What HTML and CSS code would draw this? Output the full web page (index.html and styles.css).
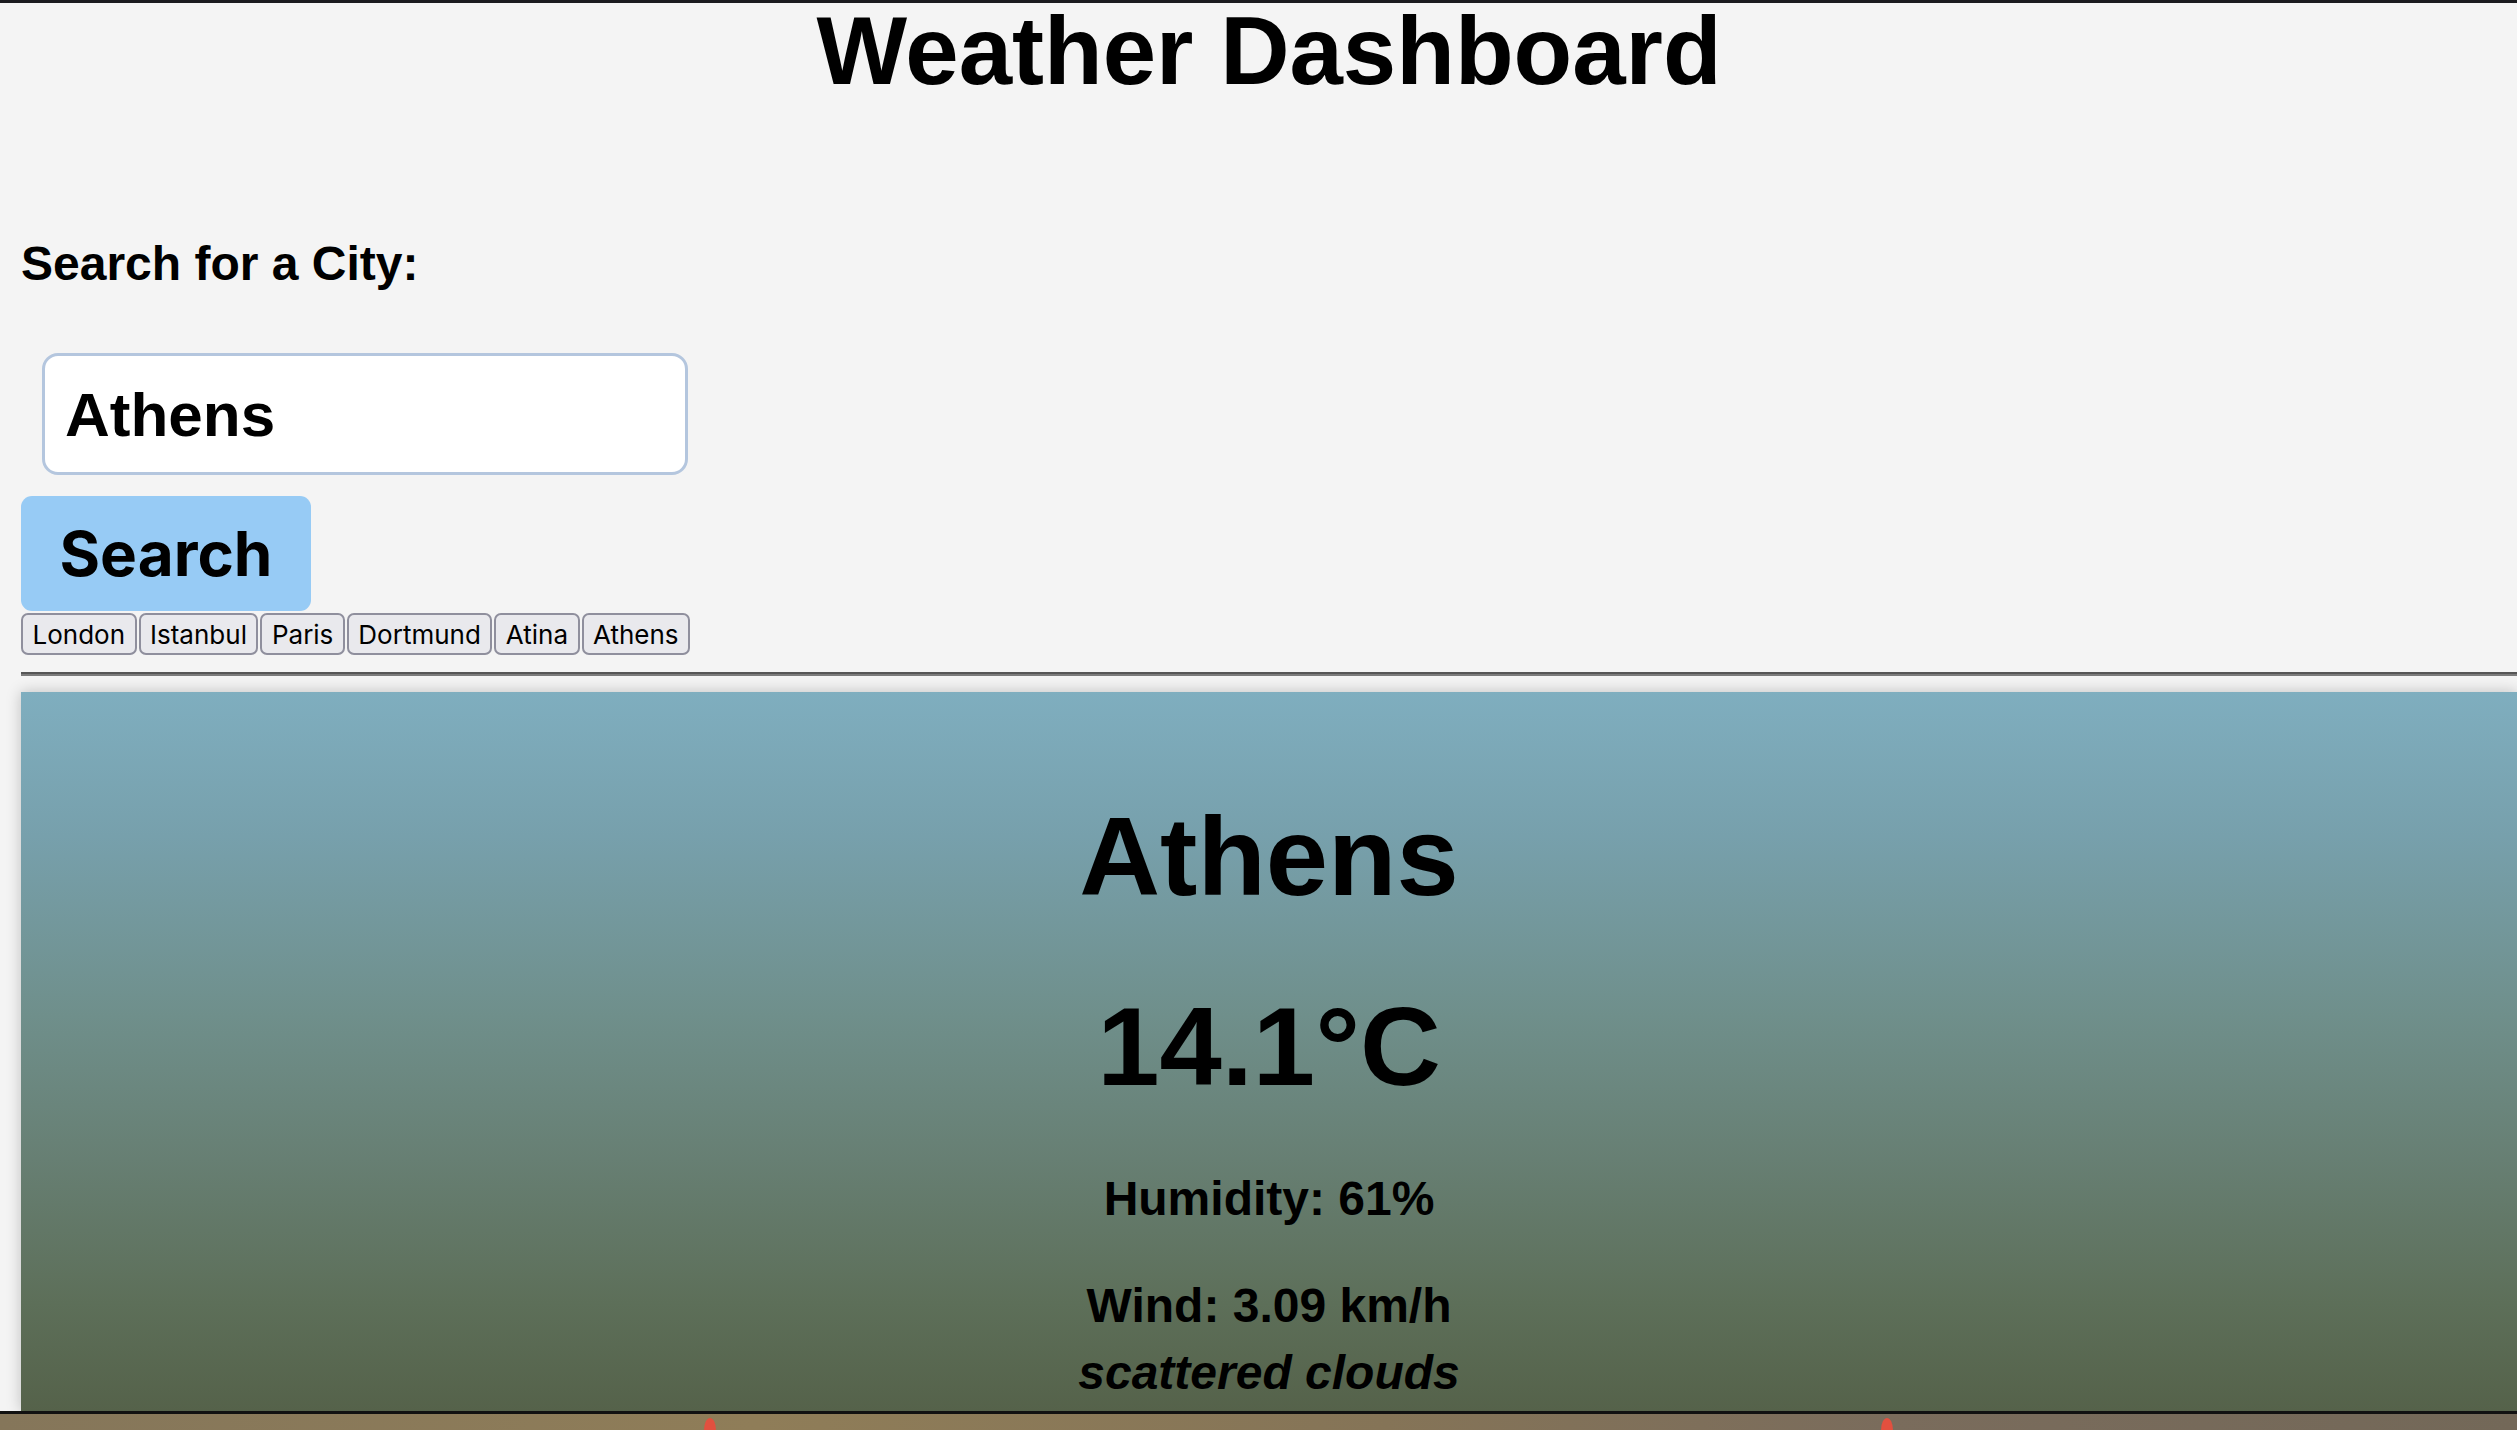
FILE: index.html
```html
<!DOCTYPE html>
<html lang="en">
<head>
<meta charset="utf-8">
<title>Weather Dashboard</title>
<link rel="stylesheet" href="styles.css">
</head>
<body>
<div class="topbar"></div>
<main class="page">
  <h1 class="title">Weather Dashboard</h1>
  <label class="label" for="city">Search for a City:</label>
  <input class="city-input" id="city" type="text" value="Athens">
  <button class="search-btn" type="button">Search</button>
  <div class="history">
    <button class="hist-btn" type="button">London</button>
    <button class="hist-btn" type="button">Istanbul</button>
    <button class="hist-btn" type="button">Paris</button>
    <button class="hist-btn" type="button">Dortmund</button>
    <button class="hist-btn" type="button">Atina</button>
    <button class="hist-btn" type="button">Athens</button>
  </div>
  <div class="rule"></div>
  <section class="card">
    <h2 class="city-name">Athens</h2>
    <div class="temp">14.1°C</div>
    <p class="stat stat-hum">Humidity: 61%</p>
    <p class="stat stat-wind">Wind: 3.09 km/h</p>
    <p class="stat stat-desc">scattered clouds</p>
  </section>
</main>
<div class="dock">
  <span class="dock-dot dot-a"></span>
  <span class="dock-dot dot-b"></span>
</div>
</body>
</html>
```

FILE: styles.css
```css
html, body {
  margin: 0;
  padding: 0;
  background: #f4f4f4;
  overflow: hidden;
}
body {
  font-family: "Liberation Sans", Arial, Helvetica, sans-serif;
  color: #000;
  width: 2517px;
  height: 1430px;
  display: flex;
  flex-direction: column;
}
.topbar {
  height: 3px;
  background: #1b1b1f;
  flex: none;
}
.page {
  padding-left: 21px;
  display: flex;
  flex-direction: column;
  align-items: flex-start;
  flex: none;
}
.title {
  align-self: stretch;
  margin: 0;
  font-size: 96px;
  line-height: 96px;
  font-weight: bold;
  text-align: center;
}
.label {
  margin-top: 141px;
  font-size: 48px;
  line-height: 48px;
  font-weight: bold;
}
.city-input {
  margin: 65px 0 0 21px;
  box-sizing: border-box;
  width: 646px;
  height: 122px;
  border: 3px solid #b4c6de;
  border-radius: 16px;
  background: #fff;
  padding: 0 20px;
  font-family: "Liberation Sans", Arial, sans-serif;
  font-size: 62px;
  font-weight: bold;
  color: #000;
  outline: none;
}
.search-btn {
  margin-top: 21px;
  box-sizing: border-box;
  width: 290px;
  height: 115px;
  border: none;
  border-radius: 11px;
  background: #97cbf5;
  font-family: Inter, "Noto Sans", sans-serif;
  font-size: 62px;
  font-weight: 700;
  color: #000;
  padding: 0;
}
.history {
  margin-top: 2px;
  display: flex;
  gap: 2px;
}
.hist-btn {
  box-sizing: border-box;
  height: 42px;
  padding: 0 9.5px;
  border: 2px solid #8f8f9d;
  border-radius: 7px;
  background: #e9e9ed;
  font-family: Inter, "Noto Sans", sans-serif;
  font-size: 26px;
  color: #000;
}
.rule {
  margin-top: 17px;
  align-self: stretch;
  height: 0;
  border-top: 2px solid #565656;
  border-bottom: 2px solid #7b7b7b;
}
.card {
  margin-top: 16px;
  align-self: stretch;
  box-sizing: border-box;
  height: 719px;
  padding-top: 109px;
  background: linear-gradient(180deg, #7faebf 0%, #77a0ac 20%, #6f8f8b 45%, #677f73 65%, #5d6f59 85%, #55624a 100%);
  box-shadow: 0 0 14px rgba(0, 0, 0, 0.22);
  display: flex;
  flex-direction: column;
  align-items: center;
  text-align: center;
}
.city-name {
  margin: 0;
  font-size: 112px;
  line-height: 112px;
  font-weight: bold;
}
.temp {
  margin-top: 78px;
  font-size: 112px;
  line-height: 112px;
  font-weight: bold;
}
.stat {
  margin: 0;
  font-size: 48px;
  line-height: 48px;
  font-weight: bold;
}
.stat-hum { margin-top: 72px; }
.stat-wind { margin-top: 59px; }
.stat-desc { margin-top: 19px; font-style: italic; }
.dock {
  position: relative;
  flex: none;
  height: 16px;
  border-top: 3px solid #111;
  background: linear-gradient(90deg, #85765a 0%, #8f7d58 30%, #857457 55%, #7a6c5c 75%, #736858 100%);
}
.dock-dot {
  position: absolute;
  top: 4px;
  width: 12px;
  height: 24px;
  border-radius: 50%;
  background: #e2503f;
}
.dot-a { left: 704px; }
.dot-b { left: 1881px; }
```
